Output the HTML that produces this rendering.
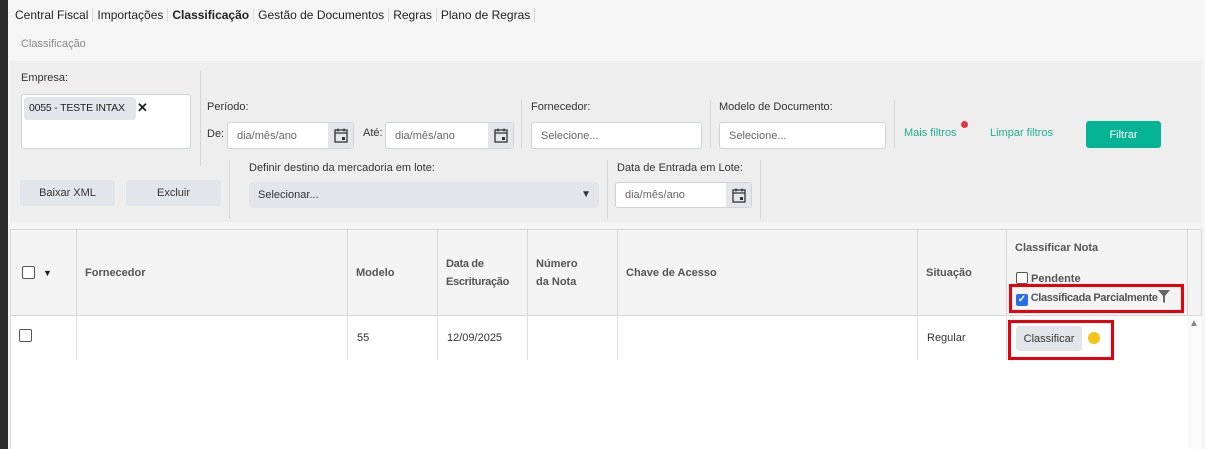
<!DOCTYPE html>
<html><head><meta charset="utf-8"><style>
*{box-sizing:border-box;margin:0;padding:0}
body{width:1205px;height:449px;overflow:hidden;background:#f5f5f5;font-family:"Liberation Sans",sans-serif;font-size:11px;color:#333;position:relative}
.a{position:absolute;white-space:nowrap}
.inp{position:absolute;background:#fff;border:1px solid #ced3da;border-radius:3px;color:#666;font-size:11px;padding-left:9px;display:flex;align-items:center}
.cal{position:absolute;right:0;top:0;bottom:0;width:25px;background:#e4e6ea;border-radius:0 3px 3px 0;display:flex;align-items:center;justify-content:center}
.sep{position:absolute;width:1px;background:#d6d6d6}
.lbl{position:absolute;font-size:11px;color:#333;white-space:nowrap}
.btn{position:absolute;background:#e2e5ea;border-radius:3px;display:flex;align-items:center;justify-content:center;font-size:11px;color:#333}
.th{position:absolute;top:229px;height:87px;border-right:1px solid #d8d8d8;font-weight:bold;color:#555;font-size:11px;display:flex;align-items:center;padding-left:9px;line-height:18px}
.vl{position:absolute;top:315px;height:45px;width:1px;background:#e0e0e0}
.td{position:absolute;top:332px;font-size:11px;color:#333}
.ts{border-left:1px solid #ddd;margin:0 4px}
</style></head><body>
<div class="a" style="left:0;top:0;width:8px;height:449px;background:#2b2b2b"></div>
<div class="a" style="left:15px;top:8px;font-size:12px;color:#222">
<span>Central Fiscal</span><span class="ts"></span><span>Importações</span><span class="ts"></span><b>Classificação</b><span class="ts"></span><span>Gestão de Documentos</span><span class="ts"></span><span>Regras</span><span class="ts"></span><span>Plano de Regras</span><span class="ts" style="margin-right:0"></span></div>
<div class="a" style="left:21px;top:38px;font-size:11px;color:#888">Classificação</div>
<div class="a" style="left:10px;top:61px;width:1192px;height:161px;background:#eeeeee"></div>
<div class="lbl" style="left:21px;top:72px">Empresa:</div>
<div class="a" style="left:21px;top:94px;width:170px;height:55px;background:#fff;border:1px solid #ced3da;border-radius:3px"></div>
<div class="a" style="left:24px;top:97px;width:112px;height:23px;background:#e2e5ea;border-radius:3px;font-size:10.5px;padding:5px 0 0 5px;color:#222;letter-spacing:-0.2px">0055 - TESTE INTAX</div>
<div class="a" style="left:137px;top:100px;font-weight:bold;font-size:13px;color:#222">✕</div>
<div class="sep" style="left:200px;top:71px;height:95px"></div>
<div class="lbl" style="left:207px;top:101px">Período:</div>
<div class="lbl" style="left:207px;top:128px">De:</div>
<div class="inp" style="left:227px;top:122px;width:127px;height:27px">dia/mês/ano<div class="cal"><svg width="14" height="15" viewBox="0 0 14 15"><rect x="1" y="2" width="12" height="12" fill="none" stroke="#333" stroke-width="1.3"/><path d="M1 5h12M4 0.5v3M10 0.5v3" stroke="#333" stroke-width="1.3"/><rect x="8" y="9" width="3" height="3" fill="#333"/></svg></div></div>
<div class="lbl" style="left:363px;top:127px">Até:</div>
<div class="inp" style="left:385px;top:122px;width:129px;height:27px">dia/mês/ano<div class="cal"><svg width="14" height="15" viewBox="0 0 14 15"><rect x="1" y="2" width="12" height="12" fill="none" stroke="#333" stroke-width="1.3"/><path d="M1 5h12M4 0.5v3M10 0.5v3" stroke="#333" stroke-width="1.3"/><rect x="8" y="9" width="3" height="3" fill="#333"/></svg></div></div>
<div class="sep" style="left:521px;top:100px;height:48px"></div>
<div class="lbl" style="left:531px;top:101px">Fornecedor:</div>
<div class="inp" style="left:531px;top:122px;width:171px;height:27px">Selecione...</div>
<div class="sep" style="left:710px;top:100px;height:48px"></div>
<div class="lbl" style="left:719px;top:101px">Modelo de Documento:</div>
<div class="inp" style="left:719px;top:122px;width:167px;height:27px">Selecione...</div>
<div class="sep" style="left:894px;top:100px;height:48px"></div>
<div class="lbl" style="left:904px;top:127px;color:#20b090">Mais filtros</div>
<div class="a" style="left:961px;top:121px;width:7px;height:7px;border-radius:50%;background:#e0383e"></div>
<div class="lbl" style="left:990px;top:127px;color:#20b090">Limpar filtros</div>
<div class="btn" style="left:1086px;top:121px;width:75px;height:27px;background:#06b394;color:#fff">Filtrar</div>
<div class="btn" style="left:20px;top:180px;width:95px;height:26px">Baixar XML</div>
<div class="btn" style="left:126px;top:180px;width:95px;height:26px">Excluir</div>
<div class="sep" style="left:229px;top:160px;height:59px"></div>
<div class="lbl" style="left:249px;top:162px">Definir destino da mercadoria em lote:</div>
<div class="a" style="left:249px;top:182px;width:350px;height:26px;background:#e2e5ea;border-radius:3px;font-size:11px;padding:7px 0 0 9px">Selecionar...<span style="position:absolute;right:8px;top:7px;font-size:10px">▼</span></div>
<div class="sep" style="left:607px;top:160px;height:59px"></div>
<div class="lbl" style="left:617px;top:162px">Data de Entrada em Lote:</div>
<div class="inp" style="left:615px;top:182px;width:137px;height:26px">dia/mês/ano<div class="cal"><svg width="14" height="15" viewBox="0 0 14 15"><rect x="1" y="2" width="12" height="12" fill="none" stroke="#333" stroke-width="1.3"/><path d="M1 5h12M4 0.5v3M10 0.5v3" stroke="#333" stroke-width="1.3"/><rect x="8" y="9" width="3" height="3" fill="#333"/></svg></div></div>
<div class="sep" style="left:760px;top:160px;height:59px"></div>
<div class="a" style="left:10px;top:229px;width:1192px;height:220px;background:#fff;border-left:1px solid #d8d8d8;border-top:1px solid #d8d8d8"></div>
<div class="a" style="left:10px;top:229px;width:1192px;height:87px;background:#f4f4f4;border:1px solid #d8d8d8"></div>
<div class="th" style="left:10px;width:67px"><span style="display:inline-block;width:13px;height:13px;border:1px solid #555;border-radius:2px;background:#fff;margin-left:3px"></span><span style="font-size:9px;margin-left:8px;color:#222">▼</span></div>
<div class="th" style="left:76px;width:272px">Fornecedor</div>
<div class="th" style="left:347px;width:91px">Modelo</div>
<div class="th" style="left:437px;width:91px;letter-spacing:-0.3px">Data de<br>Escrituração</div>
<div class="th" style="left:527px;width:91px">Número<br>da Nota</div>
<div class="th" style="left:617px;width:301px">Chave de Acesso</div>
<div class="th" style="left:917px;width:90px">Situação</div>
<div class="th" style="left:1006px;width:182px;align-items:flex-start;flex-direction:column;justify-content:flex-start;padding-top:10px">Classificar Nota</div>
<div class="a" style="left:1016px;top:272px;font-weight:bold;color:#555;font-size:11px"><span style="display:inline-block;width:12px;height:12px;border:1px solid #555;border-radius:2px;background:#fff;vertical-align:-2px"></span> Pendente</div>
<div class="a" style="left:1016px;top:290px;font-weight:bold;color:#555;font-size:11px;letter-spacing:-0.35px"><span style="display:inline-block;width:12px;height:12px;border-radius:2px;background:#2a6ee8;color:#fff;font-size:10px;line-height:12px;text-align:center;vertical-align:-1px;letter-spacing:0">✓</span> Classificada Parcialmente<svg width="12" height="13" viewBox="0 0 12 13" style="vertical-align:-2px"><path d="M0 0h12L7 6v7L5 12V6z" fill="#666"/></svg></div>
<div class="a" style="left:1009px;top:284px;width:175px;height:29px;border:3px solid #e8000b"></div>
<div class="vl" style="left:76px"></div><div class="vl" style="left:347px"></div><div class="vl" style="left:437px"></div><div class="vl" style="left:527px"></div><div class="vl" style="left:617px"></div><div class="vl" style="left:917px"></div><div class="vl" style="left:1006px"></div>
<div class="a" style="left:1188px;top:316px;width:14px;height:133px;background:#fafafa"></div>
<div class="a" style="left:1189px;top:318px;font-size:10px;color:#888">▲</div>
<div class="a" style="left:19px;top:329px;width:13px;height:13px;border:1px solid #555;border-radius:2px;background:#fff"></div>
<div class="td" style="left:357px">55</div>
<div class="td" style="left:447px">12/09/2025</div>
<div class="td" style="left:927px">Regular</div>
<div class="btn" style="left:1016px;top:326px;width:66px;height:25px">Classificar</div>
<div class="a" style="left:1088px;top:332px;width:12px;height:12px;border-radius:50%;background:#f7c21a"></div>
<div class="a" style="left:1008px;top:320px;width:106px;height:40px;border:3px solid #e8000b"></div>
</body></html>
